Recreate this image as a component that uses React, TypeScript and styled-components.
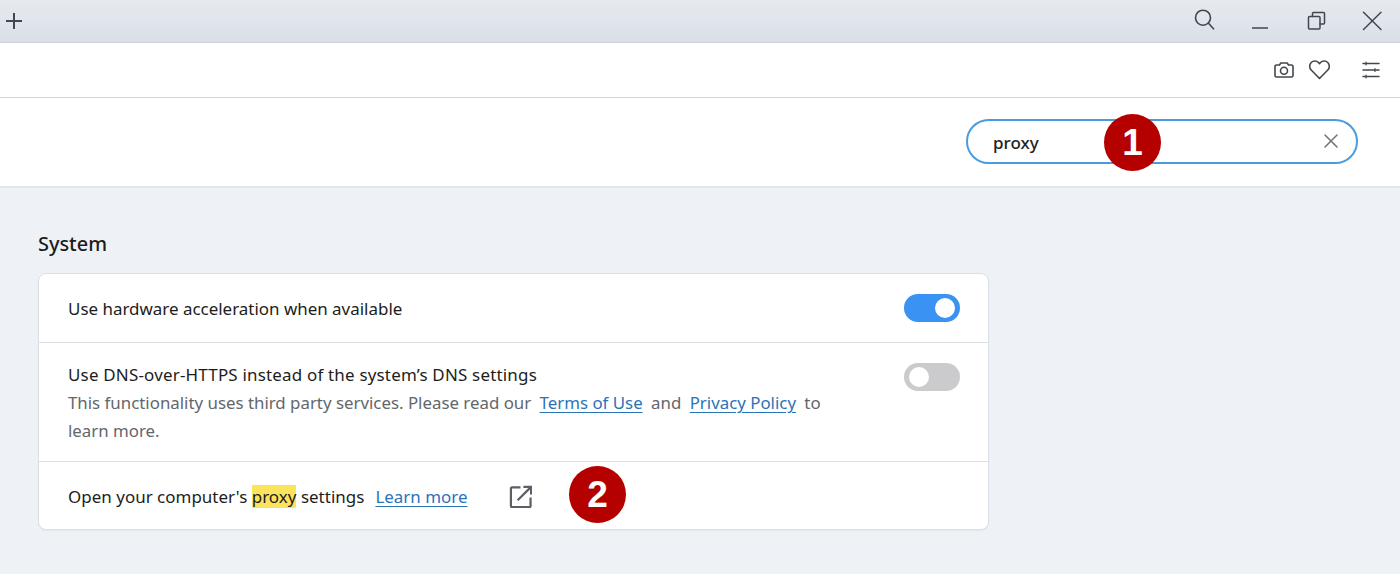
import React from 'react';
import styled, { createGlobalStyle } from 'styled-components';

const GlobalStyle = createGlobalStyle`
  html, body {
    margin: 0;
    padding: 0;
    height: 100%;
    overflow: hidden;
    background: #eef1f5;
  }
  body {
    font-family: 'Noto Sans', 'Open Sans', sans-serif;
    color: #1c1d20;
  }
`;

const Page = styled.div`
  position: relative;
  width: 1400px;
  height: 574px;
  display: flex;
  flex-direction: column;
  overflow: hidden;
`;

const TitleBar = styled.div`
  height: 43px;
  flex: none;
  box-sizing: border-box;
  display: flex;
  align-items: center;
  justify-content: space-between;
  padding: 0 18px 0 5px;
  background: linear-gradient(180deg, #e6e9ed 0%, #e2e6ed 40%, #dadee5 100%);
  border-bottom: 1px solid #cdd0d5;
`;

const WindowControls = styled.div`
  display: flex;
  align-items: center;
  gap: 36px;
`;

const IconSlot = styled.span`
  display: flex;
  flex: none;
  width: ${p => p.$size}px;
  height: ${p => p.$size}px;
  margin-left: ${p => p.$offset ?? 0}px;
  color: ${p => p.$color ?? '#43474d'};
  svg {
    overflow: visible;
  }
`;

const Toolbar = styled.div`
  height: 55px;
  flex: none;
  box-sizing: border-box;
  display: flex;
  align-items: center;
  justify-content: flex-end;
  gap: 14px;
  padding: 0 19px 1px 0;
  background: #fff;
  border-bottom: 1px solid #d4d5d8;
`;

const SearchBar = styled.div`
  height: 90px;
  flex: none;
  box-sizing: border-box;
  display: flex;
  align-items: center;
  justify-content: flex-end;
  padding: 0 42px 2px 0;
  background: #fff;
  border-bottom: 2px solid #e2e5e9;
`;

const SearchField = styled.div`
  width: 392px;
  height: 45px;
  box-sizing: border-box;
  display: flex;
  align-items: center;
  justify-content: space-between;
  padding: 0 17px 0 25px;
  border: 2px solid #4a9be0;
  border-radius: 23px;
  font-size: 17px;
  font-weight: 500;
  color: #222;
`;

const SearchText = styled.span`
  padding-top: 2px;
`;

const Content = styled.main`
  flex: 1;
  padding: 43px 0 0 38px;
`;

const SectionTitle = styled.h2`
  margin: 0 0 16px;
  font-size: 19.9px;
  line-height: 26px;
  font-weight: 500;
  color: #1b1c1f;
`;

const Card = styled.section`
  width: 951px;
  box-sizing: border-box;
  background: #fff;
  border: 1px solid #dcdfe5;
  border-radius: 8px;
  box-shadow: 0 1px 2px rgba(30, 40, 60, 0.04);
`;

const Row = styled.div`
  box-sizing: border-box;
  height: ${p => p.$height}px;
  display: flex;
  align-items: ${p => (p.$top ? 'flex-start' : 'center')};
  justify-content: space-between;
  padding: ${p => (p.$top ? '18px 28px 0 29px' : '0 28px 0 29px')};
  & + & {
    border-top: 1px solid #dcdfe3;
  }
`;

const RowText = styled.div`
  width: 770px;
  padding-top: ${p => p.$nudge ?? 0}px;
  font-size: 16.95px;
  line-height: 28px;
`;

const RowLabel = styled.div`
  letter-spacing: 0.2px;
`;

const Hint = styled.div`
  font-size: 16.85px;
  color: #63666b;
`;

const TextLink = styled.a`
  color: #2b73b8;
  text-decoration: underline;
  text-underline-offset: 3px;
  margin: 0 ${p => p.$gap ?? 4}px;
`;

const Highlight = styled.mark`
  background: #fbe45b;
  color: inherit;
`;

const InlineRow = styled.div`
  display: flex;
  align-items: center;
  padding-top: 2px;
  font-size: 16.95px;
  line-height: 28px;
`;

const InlineLabel = styled.span`
  letter-spacing: 0.03px;
`;

const OpenLink = styled.span`
  display: flex;
  margin-left: 31px;
  color: #5c5f65;
`;

const Switch = styled.span`
  position: relative;
  flex: none;
  width: 56px;
  height: 28px;
  margin-top: ${p => p.$nudge ?? 0}px;
  border-radius: 14px;
  background: ${p => (p.$on ? '#3a93f2' : '#cbcbce')};
  &::after {
    content: '';
    position: absolute;
    top: 4px;
    left: ${p => (p.$on ? '31px' : '5px')};
    width: 20px;
    height: 20px;
    border-radius: 50%;
    background: #fff;
  }
`;

const Marker = styled.span`
  position: absolute;
  left: ${p => p.$x}px;
  top: ${p => p.$y}px;
  width: 57px;
  height: 57px;
  border-radius: 50%;
  background: #b50000;
  color: #fff;
  display: flex;
  align-items: center;
  justify-content: center;
  font-family: 'Liberation Sans', Arial, sans-serif;
  font-size: 37px;
  font-weight: 700;
`;

type StrokeProps = {
  children: React.ReactNode;
  size: number;
  width?: number;
  color?: string;
  offset?: number;
};

const Stroke = ({ children, size, width = 1.5, color, offset }: StrokeProps) => (
  <IconSlot $size={size} $color={color} $offset={offset}>
    <svg
      width={size}
      height={size}
      viewBox={`0 0 ${size} ${size}`}
      fill="none"
      stroke="currentColor"
      strokeWidth={width}
      strokeLinecap="round"
      strokeLinejoin="round"
    >
      {children}
    </svg>
  </IconSlot>
);

export default function App() {
  return (
    <Page>
      <GlobalStyle />
      <TitleBar>
        <Stroke size={18} width={2}>
          <path d="M9 1v16M1 9h16" strokeLinecap="butt" />
        </Stroke>
        <WindowControls>
          <Stroke size={20} width={1.6}>
            <circle cx="9" cy="6.7" r="7.5" />
            <path d="M14.5 12.2l5 5.6" />
          </Stroke>
          <Stroke size={20}>
            <path d="M2 17h16" strokeLinecap="butt" />
          </Stroke>
          <Stroke size={20}>
            <rect x="2.5" y="5.5" width="11.5" height="12.5" rx="1" />
            <path d="M6.5 5.5V2.5a1 1 0 0 1 1-1H17.5a1 1 0 0 1 1 1V12a1 1 0 0 1-1 1H14" />
          </Stroke>
          <Stroke size={20}>
            <path d="M1.5 1.2l17.5 17.3M19 1.2L1.5 18.5" />
          </Stroke>
        </WindowControls>
      </TitleBar>

      <Toolbar>
        <Stroke size={20} width={1.6}>
          <path d="M2.5 5h3l1.3-2h6.4l1.3 2h3A1.5 1.5 0 0 1 19 6.5v9a1.5 1.5 0 0 1-1.5 1.5h-15A1.5 1.5 0 0 1 1 15.5v-9A1.5 1.5 0 0 1 2.5 5z" />
          <circle cx="10" cy="10.7" r="3.5" />
        </Stroke>
        <Stroke size={23} width={1.6}>
          <path d="M11.5 20.5L3.2 12a5.4 5.4 0 0 1 0-7.5 5.1 5.1 0 0 1 7.3 0l1 1.1 1-1.1a5.1 5.1 0 0 1 7.3 0 5.4 5.4 0 0 1 0 7.5z" />
        </Stroke>
        <Stroke size={20} offset={16}>
          <path d="M2 3.5h16M2 10h16M2 16.5h16" />
          <path d="M5 2v3M14 8.5v3M5 15v3" strokeWidth={1.2} />
        </Stroke>
      </Toolbar>

      <SearchBar>
        <SearchField>
          <SearchText>proxy</SearchText>
          <Stroke size={16} color="#6f7175">
            <path d="M2 2l12 12M14 2L2 14" />
          </Stroke>
        </SearchField>
      </SearchBar>

      <Content>
        <SectionTitle>System</SectionTitle>
        <Card>
          <Row $height={68}>
            <RowText $nudge={2}>Use hardware acceleration when available</RowText>
            <Switch $on />
          </Row>
          <Row $height={119} $top>
            <RowText>
              <RowLabel>Use DNS-over-HTTPS instead of the system’s DNS settings</RowLabel>
              <Hint>
                This functionality uses third party services. Please read our <TextLink>Terms of Use</TextLink> and{' '}
                <TextLink>Privacy Policy</TextLink> to learn more.
              </Hint>
            </RowText>
            <Switch $nudge={2} />
          </Row>
          <Row $height={68}>
            <InlineRow>
              <InlineLabel>
                Open your computer's <Highlight>proxy</Highlight> settings
              </InlineLabel>
              <TextLink $gap={11}>Learn more</TextLink>
              <OpenLink>
                <svg width="23" height="23" viewBox="0 0 24 24" fill="none" stroke="currentColor" strokeWidth="2.3">
                  <path d="M12 2.5H3a1 1 0 0 0-1 1V22a1 1 0 0 0 1 1h18.5a1 1 0 0 0 1-1V13" />
                  <path d="M9 16L22 3M15 2h8v8" />
                </svg>
              </OpenLink>
            </InlineRow>
          </Row>
        </Card>
      </Content>

      <Marker $x={1104} $y={114}>1</Marker>
      <Marker $x={569} $y={466}>2</Marker>
    </Page>
  );
}
